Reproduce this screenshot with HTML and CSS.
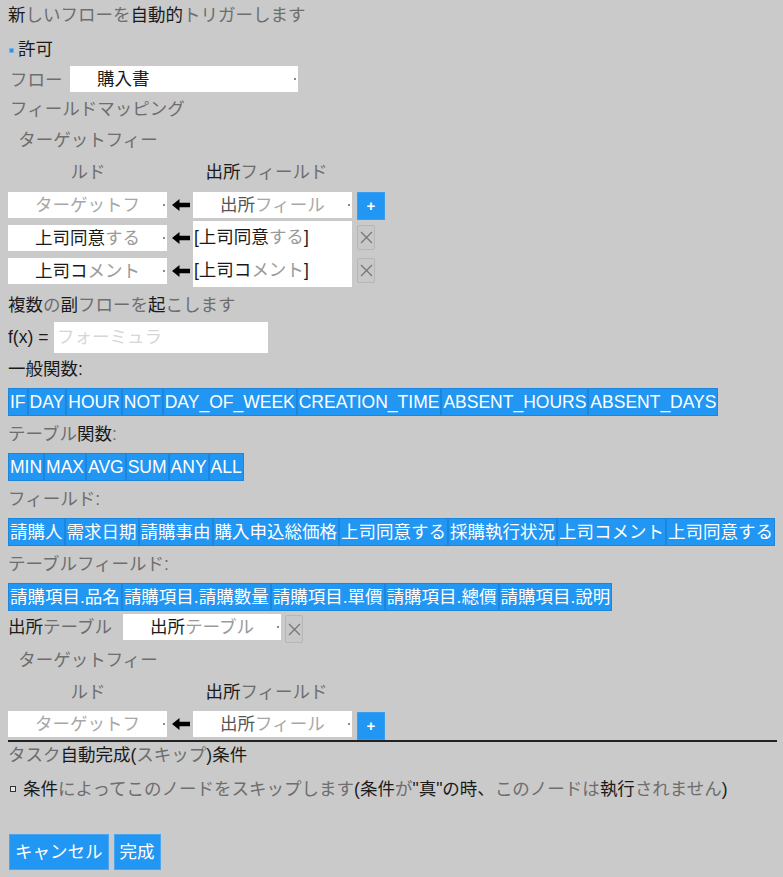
FILE: index.html
```html
<!DOCTYPE html>
<html lang="ja">
<head>
<meta charset="utf-8">
<title>フロー設定</title>
<link rel="stylesheet" href="styles.css">
</head>
<body>
<div class="page">
  <div class="title">新<span class="k">しいフローを</span>自動的<span class="k">トリガーします</span></div>

  <div class="check-row"><span class="cb cb-on"></span><span>許可</span></div>

  <div class="flow-row">
    <span class="flow-label k">フロー</span>
    <div class="sel sel-flow"><span>購入書</span><i class="dot"></i></div>
  </div>

  <div class="section k">フィールドマッピング</div>

  <div class="map">
    <div class="mh mh-t k">ターゲットフィー<br>ルド</div>
    <div class="mh mh-s">出所<span class="k">フィールド</span></div>

    <div class="c"><div class="sel sel-map ph"><span>ターゲットフ</span><i class="dot"></i></div></div>
    <div class="c arr"><svg width="18" height="12" viewBox="0 0 18 12"><path d="M0 6 L7.5 0 V3.8 H18 V8.2 H7.5 V12 Z" fill="#000"/></svg></div>
    <div class="c"><div class="sel sel-map ph"><span><b>出所</b>フィール</span><i class="dot"></i></div></div>
    <div class="c c-top"><button class="btn-add" type="button">+</button></div>

    <div class="c"><div class="sel sel-map"><span>上司同意<span class="lt">する</span></span><i class="dot"></i></div></div>
    <div class="c arr"><svg width="18" height="12" viewBox="0 0 18 12"><path d="M0 6 L7.5 0 V3.8 H18 V8.2 H7.5 V12 Z" fill="#000"/></svg></div>
    <div class="c"><div class="src">[上司同意<span class="lt">する</span>]</div></div>
    <div class="c"><button class="btn-x" type="button"><svg width="13" height="13" viewBox="0 0 13 13"><path d="M1 1 L12 12 M12 1 L1 12" stroke="#777" stroke-width="1.3" fill="none"/></svg></button></div>

    <div class="c"><div class="sel sel-map"><span>上司コ<span class="lt">メント</span></span><i class="dot"></i></div></div>
    <div class="c arr"><svg width="18" height="12" viewBox="0 0 18 12"><path d="M0 6 L7.5 0 V3.8 H18 V8.2 H7.5 V12 Z" fill="#000"/></svg></div>
    <div class="c"><div class="src">[上司コ<span class="lt">メント</span>]</div></div>
    <div class="c"><button class="btn-x" type="button"><svg width="13" height="13" viewBox="0 0 13 13"><path d="M1 1 L12 12 M12 1 L1 12" stroke="#777" stroke-width="1.3" fill="none"/></svg></button></div>
  </div>

  <div class="label label-sub">複数<span class="k">の</span>副<span class="k">フローを</span>起<span class="k">こします</span></div>

  <div class="fx-row">
    <span class="fx-label">f(x) =</span>
    <div class="fx-input">フォーミュラ</div>
  </div>

  <div class="label">一般関数:</div>
  <div class="chips">
    <span class="chip">IF</span><span class="chip">DAY</span><span class="chip">HOUR</span><span class="chip">NOT</span><span class="chip">DAY_OF_WEEK</span><span class="chip">CREATION_TIME</span><span class="chip">ABSENT_HOURS</span><span class="chip">ABSENT_DAYS</span>
  </div>

  <div class="label"><span class="k">テーブル</span>関数<span class="k">:</span></div>
  <div class="chips">
    <span class="chip">MIN</span><span class="chip">MAX</span><span class="chip">AVG</span><span class="chip">SUM</span><span class="chip">ANY</span><span class="chip">ALL</span>
  </div>

  <div class="label k">フィールド:</div>
  <div class="chips">
    <span class="chip">請購人</span><span class="chip">需求日期</span><span class="chip">請購事由</span><span class="chip">購入申込総価格</span><span class="chip">上司同意する</span><span class="chip">採購執行状況</span><span class="chip">上司コメント</span><span class="chip">上司同意する</span>
  </div>

  <div class="label k">テーブルフィールド:</div>
  <div class="chips">
    <span class="chip">請購項目.品名</span><span class="chip">請購項目.請購數量</span><span class="chip">請購項目.單價</span><span class="chip">請購項目.總價</span><span class="chip">請購項目.說明</span>
  </div>

  <div class="table-row">
    <span class="table-label">出所<span class="k">テーブル</span></span>
    <div class="sel sel-table"><span>出所<span class="lt">テーブル</span></span><i class="dot"></i></div>
    <button class="btn-x btn-x-tall" type="button"><svg width="13" height="13" viewBox="0 0 13 13"><path d="M1 1 L12 12 M12 1 L1 12" stroke="#777" stroke-width="1.3" fill="none"/></svg></button>
  </div>

  <div class="map map-2">
    <div class="mh mh-t k">ターゲットフィー<br>ルド</div>
    <div class="mh mh-s">出所<span class="k">フィールド</span></div>

    <div class="c"><div class="sel sel-map ph"><span>ターゲットフ</span><i class="dot"></i></div></div>
    <div class="c arr"><svg width="18" height="12" viewBox="0 0 18 12"><path d="M0 6 L7.5 0 V3.8 H18 V8.2 H7.5 V12 Z" fill="#000"/></svg></div>
    <div class="c"><div class="sel sel-map ph"><span><b>出所</b>フィール</span><i class="dot"></i></div></div>
    <div class="c c-top"><button class="btn-add" type="button">+</button></div>
  </div>

  <div class="label label-skip"><span class="k">タスク</span>自動完成(<span class="k">スキップ</span>)条件</div>

  <div class="check-row skip-row"><span class="cb cb-off"></span><span>条件<span class="k">によってこのノードをスキップします</span>(条件<span class="k">が</span>"真"の時、<span class="k">このノードは</span>執行<span class="k">されません</span>)</span></div>

  <div class="actions">
    <button class="btn" type="button">キャンセル</button>
    <button class="btn" type="button">完成</button>
  </div>
</div>
</body>
</html>
```

FILE: styles.css
```css
* {
  box-sizing: border-box;
}

html,
body {
  margin: 0;
  background: #cacaca;
}

body {
  font-family: "Liberation Sans", "Noto Sans CJK JP", sans-serif;
  font-size: 17.5px;
  color: #1a1a1a;
}

.page {
  width: 777px;
  padding-left: 8px;
}

.k {
  color: #6e6e6e;
}

.lt {
  color: #9a9a9a;
}

.title {
  height: 31px;
  line-height: 31px;
  white-space: nowrap;
}

.check-row {
  display: flex;
  align-items: center;
  height: 32px;
  white-space: nowrap;
}

.cb {
  display: inline-block;
  width: 5px;
  height: 5px;
  margin: 7px 4px 0 1px;
  flex-shrink: 0;
}

.cb-on {
  background: #2f8fe6;
  border: 1px solid #6fb6f2;
}

.cb-off {
  width: 6px;
  height: 6px;
  background: #e6e6e6;
  border: 1px solid #333;
  margin: 6px 7px 0 2px;
}

.flow-row {
  display: flex;
  align-items: center;
  height: 31px;
}

.flow-label {
  width: 62px;
  padding-left: 2px;
}

.sel {
  display: flex;
  align-items: center;
  background: #fff;
  height: 26px;
  line-height: 26px;
  padding-left: 27px;
  white-space: nowrap;
  overflow: hidden;
}

.sel > span {
  overflow: hidden;
}

.sel .dot {
  display: block;
  width: 2px;
  height: 2px;
  background: #8a8a8a;
  margin-left: auto;
  margin-right: 2px;
  flex-shrink: 0;
}

.sel-flow {
  width: 228px;
}

.sel-map {
  width: 159px;
}

.sel-table {
  width: 158px;
}

.ph {
  color: #a8a8a8;
}

.ph b {
  font-weight: normal;
  color: #555;
}

.section {
  height: 30px;
  line-height: 30px;
  padding-left: 2px;
}

.map {
  display: grid;
  grid-template-columns: 160px 25px 164px 28px;
  grid-template-rows: 64px 33px 33px 33px;
}

.map-2 {
  grid-template-rows: 64px 32px;
  border-bottom: 2px solid #222;
}

.mh {
  line-height: 32px;
  white-space: nowrap;
}

.mh-t {
  grid-column: 1;
  text-align: center;
}

.mh-s {
  grid-column: 2 / 5;
  align-self: end;
  text-align: center;
  padding-right: 20px;
}

.c {
  display: flex;
  align-items: center;
}

.c-top {
  align-items: flex-start;
}

.arr {
  justify-content: center;
  padding-left: 1px;
}

.src {
  background: #fff;
  width: 159px;
  height: 100%;
  line-height: 33px;
  padding-left: 1px;
  white-space: nowrap;
}

.btn-add {
  width: 28px;
  height: 28px;
  margin-top: 4px;
  padding: 0;
  border: 1px solid #3a9ef0;
  background: #2196f3;
  color: #fff;
  font-family: "Liberation Sans", sans-serif;
  font-size: 15px;
  font-weight: bold;
  line-height: 24px;
}

.btn-x {
  display: flex;
  align-items: center;
  justify-content: center;
  width: 18px;
  height: 25px;
  padding: 0;
  background: #c8c8c8;
  border: 1px solid #b6b6b6;
  border-radius: 2px;
}

.btn-x-tall {
  height: 28px;
  margin-left: 4px;
  align-self: flex-start;
  margin-top: 1px;
}

.label {
  height: 33px;
  line-height: 33px;
  white-space: nowrap;
}

.label-sub {
  height: 34px;
  padding-top: 3px;
  line-height: 31px;
}

.label-skip {
  height: 26px;
  line-height: 26px;
}

.fx-row {
  display: flex;
  align-items: center;
  height: 32px;
}

.fx-label {
  width: 46px;
}

.fx-input {
  width: 214px;
  height: 31px;
  line-height: 31px;
  background: #fff;
  color: #d6d6d6;
  padding-left: 3px;
}

.chips {
  display: flex;
  flex-wrap: nowrap;
  padding: 2px 0;
  height: 32px;
}

.chip {
  flex-shrink: 0;
  height: 28px;
  line-height: 26px;
  padding: 0 1px;
  background: #2196f3;
  border: 1px solid #1d86da;
  color: #fff;
  white-space: nowrap;
}

.table-row {
  display: flex;
  align-items: flex-start;
  height: 31px;
  padding-top: 1px;
}

.table-label {
  width: 115px;
  line-height: 26px;
  white-space: nowrap;
}

.skip-row {
  height: 36px;
  margin-top: 1px;
}

.skip-row .cb {
  margin-top: 4px;
}

.actions {
  display: flex;
  gap: 5px;
  margin-top: 29px;
  padding-left: 1px;
}

.btn {
  height: 36px;
  padding: 0 5px;
  background: #2196f3;
  border: 1px solid #4aa6f0;
  color: #fff;
  font-family: "Liberation Sans", "Noto Sans CJK JP", sans-serif;
  font-size: 17.5px;
  line-height: 34px;
}
```
